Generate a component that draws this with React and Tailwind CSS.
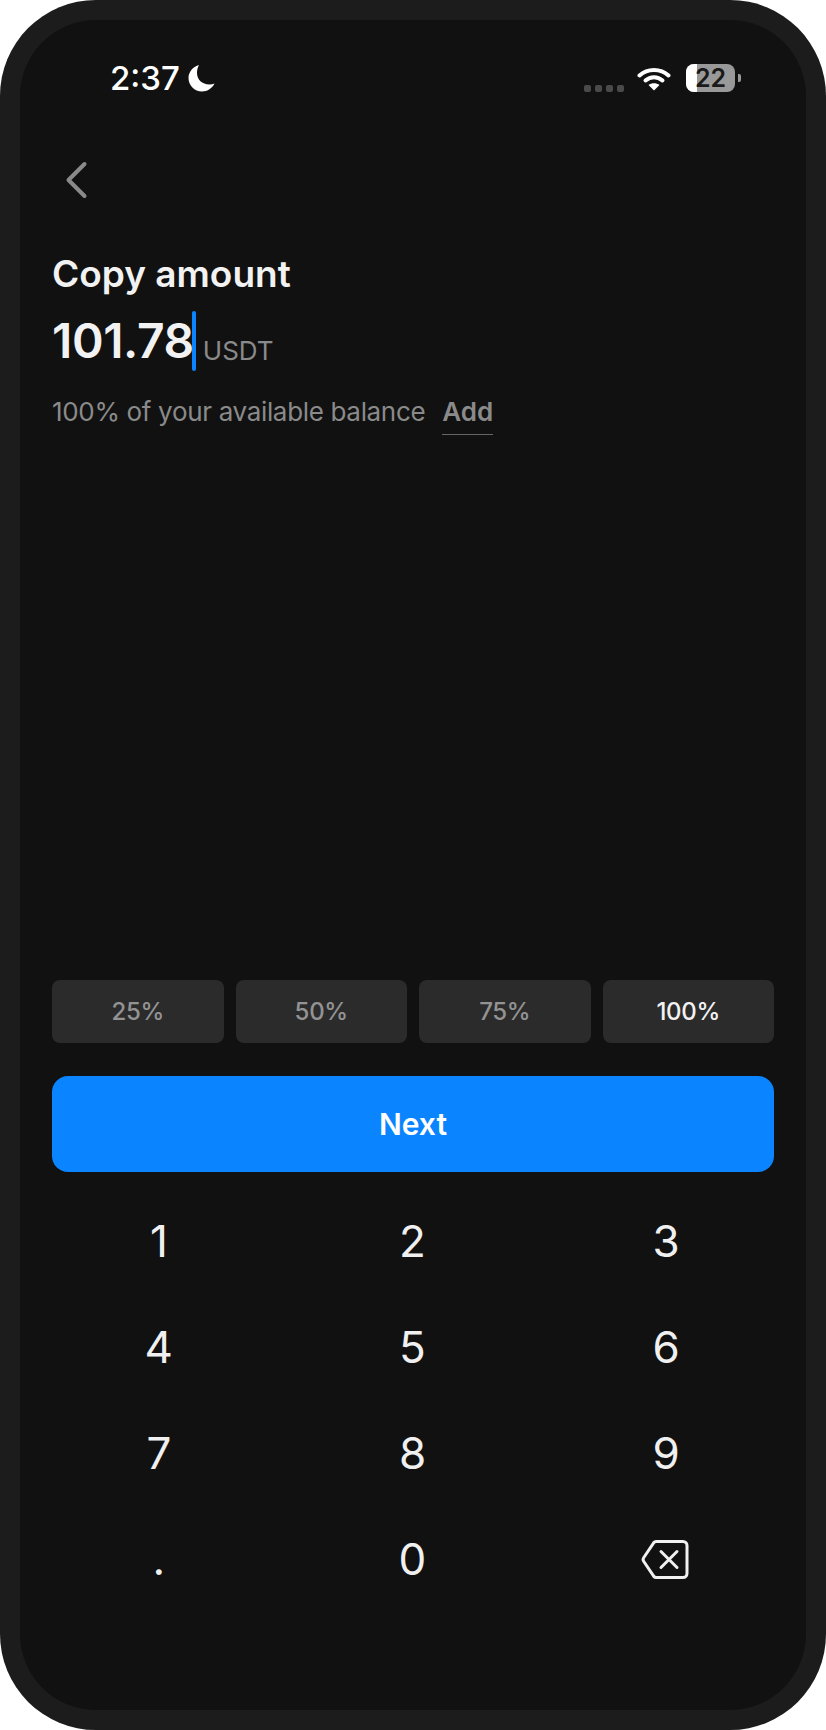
import React from "react";

const chips = [
  { label: "25%", active: false },
  { label: "50%", active: false },
  { label: "75%", active: false },
  { label: "100%", active: true },
];

const keys = ["1", "2", "3", "4", "5", "6", "7", "8", "9", ".", "0"];

function StatusBar() {
  return (
    <div className="flex h-[28px] items-center justify-between pl-[90px] pr-[65px]">
      <div className="flex items-center gap-[7px]">
        <span className="text-[33px] font-medium leading-[28px] text-white">2:37</span>
        <svg width="29" height="28" viewBox="0 0 28 28" fill="#fff">
          <path d="M11.5 1C6 2.600 1 7.400 1 14c0 7.500 6 13.500 13.500 13.500 5.500 0 10.300-3.300 12.500-8-1.500.7-3.200 1-5 1C14.500 20.500 9.500 15.500 9.500 9c0-2.900.7-5.700 2-8z" />
        </svg>
      </div>
      <div className="flex items-center">
        <div className="mr-[13px] mt-[20px] flex gap-[4px]">
          <div className="h-[7px] w-[7px] rounded-[2px] bg-[#4a4a4a]" />
          <div className="h-[7px] w-[7px] rounded-[2px] bg-[#4a4a4a]" />
          <div className="h-[7px] w-[7px] rounded-[2px] bg-[#4a4a4a]" />
          <div className="h-[7px] w-[7px] rounded-[2px] bg-[#4a4a4a]" />
        </div>
        <svg width="34" height="25" viewBox="0 0 34 25" fill="none" className="mr-[15px]">
          <path d="M2.500 9.500C10.500 2 23.500 2 31.500 9.500" stroke="#fff" strokeWidth="4" strokeLinecap="round" />
          <path d="M8.500 14.500C13.500 10 20.500 10 25.500 14.500" stroke="#fff" strokeWidth="4" strokeLinecap="round" />
          <path d="M17 24.500L11.500 19c3-2.500 8-2.500 11 0z" fill="#fff" />
        </svg>
        <div className="relative flex h-[28px] w-[49px] items-center justify-center rounded-[8px] bg-[#999999]">
          <div className="absolute inset-y-0 left-0 w-[11px] rounded-l-[8px] bg-white" />
          <span className="relative text-[25px] font-semibold leading-none text-[#1a1a1a]">22</span>
        </div>
        <div className="ml-[3px] h-[8px] w-[3px] rounded-r-[2px] bg-[#999999]" />
      </div>
    </div>
  );
}

function BackspaceIcon() {
  return (
    <svg width="48" height="41" viewBox="0 0 48 41" fill="none" stroke="#f0f0f0" strokeWidth="3" strokeLinecap="round" strokeLinejoin="round">
      <path d="M15 2.500H42a4 4 0 0 1 4 4v28a4 4 0 0 1-4 4H15a3 3 0 0 1-2-.9L2.800 22.500a3.500 3.500 0 0 1 0-4L13 3.400a3 3 0 0 1 2-.9z" />
      <path d="M20 12.500L36 28.500M36 12.500L20 28.500" />
    </svg>
  );
}

export default function App() {
  return (
    <div className="h-[1730px] w-[826px] bg-white font-['Inter',sans-serif]">
      <div className="h-full rounded-[96px] bg-[#1c1c1c] p-[20px]">
        <div className="flex h-full flex-col rounded-[76px] bg-[#111111] pb-[98px] pt-[44px]">
          <StatusBar />

          <div className="px-[32px]">
            <svg width="24" height="38" viewBox="0 0 24 38" fill="none" className="ml-[13px] mt-[69px]">
              <path d="M19.500 3L3.500 19L19.500 35" stroke="#8a8a8a" strokeWidth="4" strokeLinecap="round" strokeLinejoin="round" />
            </svg>

            <h1 className="mt-[53px] text-[37px] font-semibold leading-[44px] text-[#f2f2f2]">Copy amount</h1>

            <div className="mt-[15px] flex h-[60px] items-center">
              <span className="text-[48px] font-semibold leading-[60px] tracking-[-0.4px] text-[#f2f2f2]">101.78</span>
              <div className="ml-[-2px] h-[60px] w-[4px] rounded-[2px] bg-[#0a84ff]" />
              <span className="ml-[7px] mt-[20px] text-[26px] leading-[36px] text-[#8a8a8a]">USDT</span>
            </div>

            <div className="mt-[23px] flex items-start text-[26px] leading-[36px] tracking-[-0.33px] text-[#8a8a8a]">
              <span>100% of your available balance</span>
              <span className="ml-[17px] border-b border-[#666666] pb-[4px] font-semibold tracking-normal">Add</span>
            </div>
          </div>

          <div className="mt-auto px-[32px]">
            <div className="grid grid-cols-4 gap-[12px]">
              {chips.map((chip) => (
                <button
                  key={chip.label}
                  className={`h-[63px] rounded-[8px] bg-[#2b2b2b] text-[24px] font-medium tracking-[-0.3px] ${
                    chip.active ? "text-[#f2f2f2]" : "text-[#939393]"
                  }`}
                >
                  {chip.label}
                </button>
              ))}
            </div>

            <button className="mt-[33px] h-[96px] w-full rounded-[16px] bg-[#0a84ff] text-[30px] font-semibold text-white">
              Next
            </button>
          </div>

          <div className="mt-[16px] grid grid-cols-3 pl-[12px] pr-[13px]">
            {keys.map((key) => (
              <div key={key} className="flex h-[106px] items-center justify-center text-[44px] text-[#f0f0f0]">
                {key}
              </div>
            ))}
            <div className="flex h-[106px] items-center justify-center pr-[2px]">
              <BackspaceIcon />
            </div>
          </div>
        </div>
      </div>
    </div>
  );
}
